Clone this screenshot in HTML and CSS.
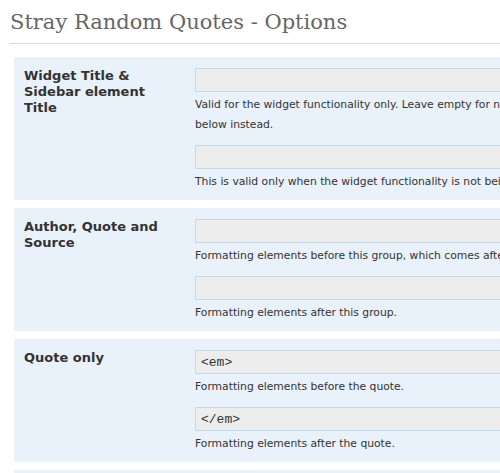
FILE: index.html
```html
<!DOCTYPE html>
<html>
<head>
<meta charset="utf-8">
<link rel="stylesheet" href="styles.css">
</head>
<body>
<div class="wrap">
  <h2 class="page-title">Stray Random Quotes - Options</h2>
  <div class="sections">
    <div class="section">
      <div class="label">Widget Title &amp; Sidebar element Title</div>
      <div class="fields">
        <div class="field">
          <input class="text" type="text" value="">
          <div class="desc">Valid for the widget functionality only. Leave empty for no title. Use the sidebar element title below instead.</div>
        </div>
        <div class="field">
          <input class="text" type="text" value="">
          <div class="desc">This is valid only when the widget functionality is not being used.</div>
        </div>
      </div>
    </div>
    <div class="section">
      <div class="label">Author, Quote and Source</div>
      <div class="fields">
        <div class="field">
          <input class="text" type="text" value="">
          <div class="desc">Formatting elements before this group, which comes after the widget title.</div>
        </div>
        <div class="field">
          <input class="text" type="text" value="">
          <div class="desc">Formatting elements after this group.</div>
        </div>
      </div>
    </div>
    <div class="section">
      <div class="label">Quote only</div>
      <div class="fields">
        <div class="field">
          <input class="text" type="text" value="&lt;em&gt;">
          <div class="desc">Formatting elements before the quote.</div>
        </div>
        <div class="field">
          <input class="text" type="text" value="&lt;/em&gt;">
          <div class="desc">Formatting elements after the quote.</div>
        </div>
      </div>
    </div>
    <div class="section">
      <div class="label">Author</div>
      <div class="fields">
        <div class="field">
          <input class="text" type="text" value="">
          <div class="desc">Formatting elements before the author.</div>
        </div>
      </div>
    </div>
  </div>
</div>
</body>
</html>
```

FILE: styles.css
```css
html, body {
  margin: 0;
  padding: 0;
  background: #ffffff;
  overflow: hidden;
}
.wrap {
  width: 760px;
  padding-left: 10px;
}
.page-title {
  margin: 0;
  padding: 10px 0 0 0;
  height: 33px;
  font-family: "DejaVu Serif", serif;
  font-weight: normal;
  font-size: 21px;
  line-height: 24px;
  color: #666666;
  border-bottom: 1px solid #dadada;
}
.sections {
  display: flex;
  flex-direction: column;
  gap: 8px;
  margin-top: 13px;
  padding-left: 4px;
}
.section {
  display: flex;
  background: #e9f1fa;
  padding: 11px 0 8px 10px;
}
.label {
  width: 140px;
  flex: none;
  padding-top: 0;
  padding-right: 31px;
  font-family: "DejaVu Sans", sans-serif;
  font-weight: bold;
  font-size: 13px;
  line-height: 16px;
  color: #333333;
}
.fields {
  display: flex;
  flex-direction: column;
  gap: 10px;
  width: 510px;
  flex: none;
}
.text {
  display: block;
  box-sizing: border-box;
  width: 100%;
  height: 24px;
  margin: 0;
  padding: 2px 5px;
  border: 1px solid #c6d9ea;
  background: #ededed;
  font-family: "Liberation Mono", monospace;
  font-size: 13px;
  color: #333333;
  outline: none;
}
.desc {
  margin-top: 3px;
  font-family: "DejaVu Sans", sans-serif;
  font-size: 10.75px;
  line-height: 20px;
  color: #333333;
}
```
